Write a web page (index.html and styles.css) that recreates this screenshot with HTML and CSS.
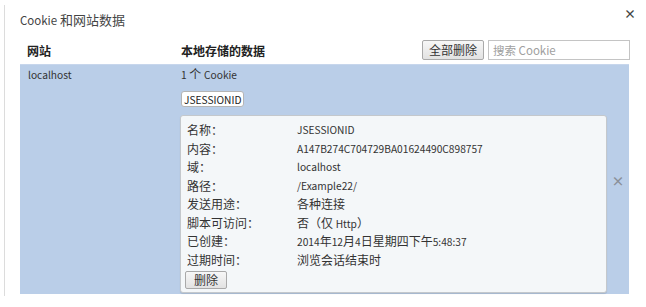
FILE: index.html
```html
<!DOCTYPE html>
<html lang="zh-CN">
<head>
<meta charset="utf-8">
<title>Cookie 和网站数据</title>
<link rel="stylesheet" href="styles.css">
</head>
<body>
<div class="dialog">
  <div class="title"><span class="en">Cookie</span> 和网站数据</div>
  <div class="close">×</div>
  <div class="header">
    <div class="col-site">网站</div>
    <div class="col-data">本地存储的数据</div>
    <button class="btn btn-all">全部删除</button>
    <input class="search" type="text" placeholder="搜索 Cookie">
  </div>
  <div class="row">
    <div class="site"><span class="en">localhost</span></div>
    <div class="data">
      <div class="count"><span class="en">1</span> 个 <span class="en">Cookie</span></div>
      <div class="pill"><span class="en">JSESSIONID</span></div>
      <div class="detail-wrap">
        <div class="detail">
          <div class="kv"><span class="k">名称：</span><span class="v en">JSESSIONID</span></div>
          <div class="kv"><span class="k">内容：</span><span class="v en">A147B274C704729BA01624490C898757</span></div>
          <div class="kv"><span class="k">域：</span><span class="v en">localhost</span></div>
          <div class="kv"><span class="k">路径：</span><span class="v en">/Example22/</span></div>
          <div class="kv"><span class="k">发送用途：</span><span class="v">各种连接</span></div>
          <div class="kv"><span class="k">脚本可访问：</span><span class="v">否（仅 <span class="en">Http</span>）</span></div>
          <div class="kv"><span class="k">已创建：</span><span class="v"><span class="en">2014</span>年<span class="en">12</span>月<span class="en">4</span>日星期四下午<span class="en">5:48:37</span></span></div>
          <div class="kv"><span class="k">过期时间：</span><span class="v">浏览会话结束时</span></div>
          <button class="btn btn-del">删除</button>
        </div>
        <div class="row-x">×</div>
      </div>
    </div>
  </div>
</div>
</body>
</html>
```
FILE: styles.css
```css
* { box-sizing: border-box; }
html, body { margin: 0; padding: 0; background: #fff; }
body {
  font-family: "Noto Sans CJK SC", "Noto Sans", sans-serif;
  font-size: 12px;
  color: #333;
  width: 646px;
  height: 307px;
  overflow: hidden;
}
.en { font-size: 10.2px; }
.dialog {
  position: relative;
  margin: 5px 0 0 4px;
  border-left: 1px solid #dcdcdc;
  height: 291px;
  padding: 0 16px 0 15px;
}
.title {
  padding-top: 6px;
  line-height: 18px;
  font-size: 13px;
  color: #444;
}
.title .en { font-size: 11.5px; }
.close {
  position: absolute;
  right: 10px;
  top: 3px;
  font-size: 12px;
  font-weight: bold;
  color: #444;
  line-height: 12px;
}
.header {
  display: flex;
  align-items: center;
  margin-top: 11px;
  height: 20px;
  padding-left: 7px;
}
.col-site { width: 154px; font-weight: bold; color: #222; }
.col-data { flex: 1; font-weight: bold; color: #222; }
.btn {
  font-family: "Noto Sans CJK SC", "Noto Sans", sans-serif;
  font-size: 12px;
  color: #333;
  background: linear-gradient(#f7f7f7, #e2e2e2);
  border: 1px solid #a9a9a9;
  border-radius: 2px;
  padding: 0;
  line-height: 16px;
}
.btn-all { width: 62px; height: 20px; }
.search {
  margin-left: 4px;
  width: 142px;
  height: 20px;
  border: 1px solid #c4c4c4;
  padding: 0 4px;
  font-family: "Noto Sans CJK SC", "Noto Sans", sans-serif;
  font-size: 11.5px;
  color: #333;
  outline: none;
}
.search::placeholder { color: #a0a0a0; }
.row {
  margin-top: 4px;
  width: 609px;
  height: 230px;
  background: #bacee8;
  border-top: 1px solid #c7d6ec;
  display: flex;
  padding: 1px 0 2px 8px;
}
.site { width: 153px; line-height: 16px; }
.data { flex: 1; }
.count { line-height: 16px; }
.pill {
  display: inline-block;
  margin-top: 8px;
  height: 16px;
  line-height: 14px;
  padding: 0 2px;
  background: #fff;
  border: 1px solid #b5b5b5;
  border-radius: 3px;
  color: #222;
}
.detail-wrap {
  display: flex;
  align-items: flex-start;
  margin-top: 8px;
  margin-left: -1px;
}
.detail {
  width: 427px;
  height: 178px;
  background: #f4f7f9;
  border: 1px solid #c4c8cc;
  border-radius: 3px;
  box-shadow: 0 1px 1px rgba(0,0,0,0.12);
  padding: 5px 6px 0 6px;
}
.kv { display: flex; line-height: 18.5px; height: 18.5px; }
.k { width: 110px; }
.v { color: #333; }
.btn-del { margin-top: 2px; width: 42px; height: 18px; margin-left: -2px; }
.row-x {
  flex: 1;
  margin-top: 58px;
  text-align: center;
  font-size: 13px;
  font-weight: bold;
  color: #8a9099;
  line-height: 16px;
}
```
